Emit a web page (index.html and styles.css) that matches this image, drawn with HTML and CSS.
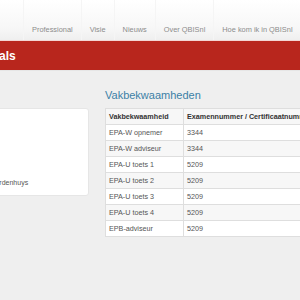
FILE: index.html
```html
<!DOCTYPE html>
<html lang="nl">
<head>
  <meta charset="UTF-8">
  <meta name="viewport" content="width=device-width, initial-scale=1.0">
  <title>Professionals</title>
  <link rel="stylesheet" href="styles.css">
</head>
<body>
  <div class="topbar">
    <ul class="nav">
      <li>Professional</li>
      <li>Visie</li>
      <li>Nieuws</li>
      <li>Over QBISnl</li>
      <li>Hoe kom ik in QBISnl</li>
    </ul>
  </div>

  <div class="banner">
    <h1>Professionals</h1>
  </div>

  <div class="content">
    <div class="side">
      <div class="card">
        <p>Adviesbureau van Werdenhuys</p>
      </div>
    </div>

    <div class="main">
      <h2>Vakbekwaamheden</h2>
      <table class="skills">
        <tr>
          <th>Vakbekwaamheid</th>
          <th>Examennummer / Certificaatnummer</th>
        </tr>
        <tr><td>EPA-W opnemer</td><td>3344</td></tr>
        <tr><td>EPA-W adviseur</td><td>3344</td></tr>
        <tr><td>EPA-U toets 1</td><td>5209</td></tr>
        <tr><td>EPA-U toets 2</td><td>5209</td></tr>
        <tr><td>EPA-U toets 3</td><td>5209</td></tr>
        <tr><td>EPA-U toets 4</td><td>5209</td></tr>
        <tr><td>EPB-adviseur</td><td>5209</td></tr>
      </table>
    </div>
  </div>
</body>
</html>
```

FILE: styles.css
```css
body {
  margin: 0;
  font-family: "Liberation Sans", Arial, sans-serif;
  background-color: #efefef;
  color: #555;
  overflow: hidden;
}

.topbar {
  height: 40px;
  background: linear-gradient(#ffffff, #f7f7f7 70%, #efefef);
  border-bottom: 1px solid #f3d6d3;
}

.nav {
  display: flex;
  height: 40px;
  margin: 0;
  padding: 0 0 0 23px;
  list-style: none;
}

.nav li {
  display: flex;
  align-items: flex-end;
  padding: 0 8px 6px 8px;
  border-left: 1px solid #f5f5f5;
  font-size: 7.4px;
  color: #8c8c8c;
  white-space: nowrap;
}

.banner {
  height: 29px;
  background-color: #b8261d;
  border-bottom: 1px solid #e6e6e6;
  display: flex;
  align-items: center;
}

.banner h1 {
  margin: 0 0 0 -63px;
  font-size: 12px;
  font-weight: bold;
  color: #fff;
}

.content {
  display: flex;
  gap: 16px;
  margin-left: -70px;
  padding-top: 17px;
}

.side {
  width: 159px;
  flex-shrink: 0;
  padding-top: 20px;
}

.card {
  height: 88px;
  box-sizing: border-box;
  background-color: #fff;
  border: 1px solid #e6e6e6;
  border-radius: 3px;
  padding: 70px 8px 0 0;
}

.card p {
  margin: 0;
  font-size: 7px;
  white-space: nowrap;
}

.main {
  flex-shrink: 0;
}

.main h2 {
  margin: 0 0 6px 0;
  font-size: 11px;
  line-height: 14px;
  font-weight: normal;
  color: #3c7fa6;
}

.skills {
  width: 320px;
  border-collapse: collapse;
  background-color: #fff;
  font-size: 7.2px;
}

.skills th,
.skills td {
  height: 15px;
  padding: 0 3px;
  border: 1px solid #dedede;
  text-align: left;
  white-space: nowrap;
}

.skills th {
  color: #333;
}

.skills th:first-child,
.skills td:first-child {
  width: 71px;
}

.skills tr:nth-child(odd) {
  background-color: #f7f7f7;
}
```
